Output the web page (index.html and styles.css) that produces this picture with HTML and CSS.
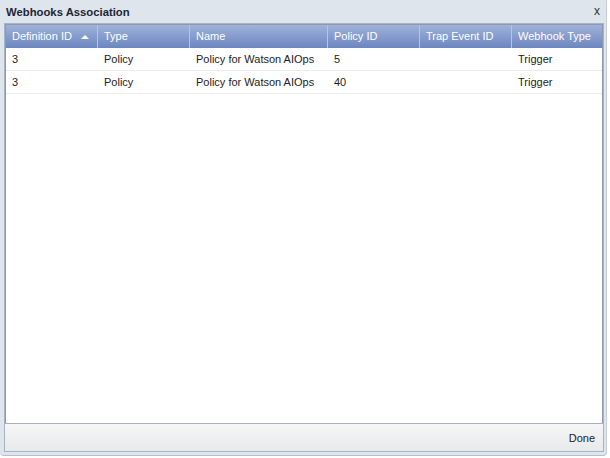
FILE: index.html
```html
<!DOCTYPE html>
<html>
<head>
<meta charset="utf-8">
<link rel="stylesheet" href="styles.css">
</head>
<body>
<div class="window">
  <div class="titlebar">
    <span class="title">Webhooks Association</span>
    <span class="close">x</span>
  </div>
  <div class="body">
    <div class="grid">
      <div class="row head">
        <div class="cell c1">Definition ID <span class="sort"></span></div>
        <div class="cell c2">Type</div>
        <div class="cell c3">Name</div>
        <div class="cell c4">Policy ID</div>
        <div class="cell c5">Trap Event ID</div>
        <div class="cell c6">Webhook Type</div>
      </div>
      <div class="row data">
        <div class="cell c1">3</div>
        <div class="cell c2">Policy</div>
        <div class="cell c3">Policy for Watson AIOps</div>
        <div class="cell c4">5</div>
        <div class="cell c5"></div>
        <div class="cell c6">Trigger</div>
      </div>
      <div class="row data">
        <div class="cell c1">3</div>
        <div class="cell c2">Policy</div>
        <div class="cell c3">Policy for Watson AIOps</div>
        <div class="cell c4">40</div>
        <div class="cell c5"></div>
        <div class="cell c6">Trigger</div>
      </div>
    </div>
    <div class="footer">
      <span class="done">Done</span>
    </div>
  </div>
</div>
</body>
</html>
```
FILE: styles.css
```css
html, body {
  margin: 0;
  padding: 0;
  background: #ffffff;
}
body {
  width: 610px;
  height: 458px;
  font-family: "Liberation Sans", Arial, sans-serif;
  font-size: 11px;
  color: #222;
}
.window {
  width: 607px;
  height: 456px;
  background: #dfe5ed;
  border-right: 1px solid #c5ccd6;
  border-bottom: 1px solid #b8bfca;
  border-radius: 0 0 4px 4px;
  display: flex;
  flex-direction: column;
  box-sizing: border-box;
}
.titlebar {
  height: 23px;
  display: flex;
  align-items: center;
  justify-content: space-between;
  padding: 0 6px 0 6px;
  box-sizing: border-box;
}
.title {
  font-weight: bold;
  font-size: 11.3px;
  color: #1e2633;
  padding-top: 1px;
}
.close {
  font-size: 12px;
  color: #333;
  margin-top: -1px;
}
.body {
  flex: 1;
  margin: 0 2px 3px 4px;
  display: flex;
  flex-direction: column;
  border: 1px solid #a9b2c2;
}
.grid {
  flex: 1;
  background: #fff;
  border: 1px solid #8e99ad;
  border-bottom: none;
}
.row {
  display: grid;
  grid-template-columns: 92px 92px 138px 92px 92px 1fr;
}
.head {
  height: 23px;
  background: linear-gradient(#a0b2da, #6c86bf);
  color: #fff;
}
.head .cell {
  border-right: 1px solid #b6c4e2;
  line-height: 23px;
}
.head .cell:last-child {
  border-right: none;
}
.cell {
  padding-left: 6px;
  white-space: nowrap;
  overflow: hidden;
}
.data {
  height: 23px;
  border-bottom: 1px solid #ececec;
  box-sizing: border-box;
}
.data .cell {
  line-height: 22px;
  color: #222;
}
.sort {
  display: inline-block;
  width: 0;
  height: 0;
  border-left: 4px solid transparent;
  border-right: 4px solid transparent;
  border-bottom: 4px solid #fff;
  margin-left: 6px;
  vertical-align: 1px;
}
.footer {
  height: 27px;
  background: linear-gradient(#f6f6f6, #e7e9eb);
  border-top: 1px solid #a7afbf;
  display: flex;
  align-items: center;
  justify-content: flex-end;
  padding-right: 8px;
}
.done {
  font-family: "Liberation Sans", Arial, sans-serif;
  font-size: 11px;
  color: #222;
}
```
